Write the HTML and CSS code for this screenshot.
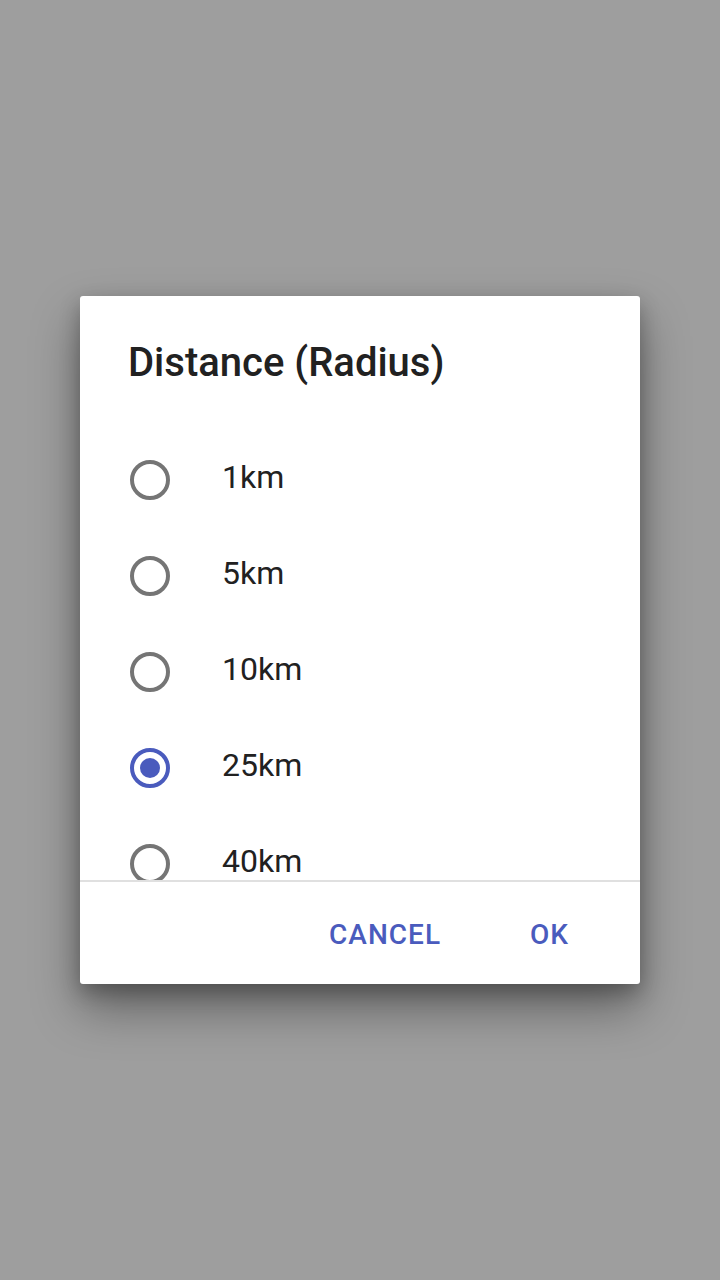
FILE: index.html
```html
<!DOCTYPE html>
<html>
<head>
<meta charset="utf-8">
<link rel="stylesheet" href="styles.css">
</head>
<body>
<div class="screen">
  <div class="dialog">
    <div class="title">Distance (Radius)</div>
    <div class="list">
      <div class="row"><span class="radio"></span><span class="label">1km</span></div>
      <div class="row"><span class="radio"></span><span class="label">5km</span></div>
      <div class="row"><span class="radio"></span><span class="label">10km</span></div>
      <div class="row"><span class="radio checked"></span><span class="label">25km</span></div>
      <div class="row"><span class="radio"></span><span class="label">40km</span></div>
    </div>
    <div class="divider"></div>
    <div class="actions">
      <span class="btn">CANCEL</span>
      <span class="btn">OK</span>
    </div>
  </div>
</div>
</body>
</html>
```
FILE: styles.css
```css
html, body {
  margin: 0;
  padding: 0;
}
body {
  background: #9e9e9e;
  font-family: Roboto, "Noto Sans", sans-serif;
}
.screen {
  width: 720px;
  height: 1280px;
  padding-top: 296px;
  box-sizing: border-box;
}
.dialog {
  margin-left: 80px;
  width: 560px;
  height: 688px;
  background: #ffffff;
  border-radius: 3px;
  box-shadow: 0 24px 48px rgba(0,0,0,0.38), 0 8px 20px rgba(0,0,0,0.25);
  display: flex;
  flex-direction: column;
  overflow: hidden;
}
.title {
  padding: 41px 48px 0 48px;
  height: 79px;
  font-size: 40px;
  font-weight: 500;
  color: #212121;
  line-height: 52px;
}
.list {
  height: 464px;
  overflow: hidden;
  padding-top: 16px;
  box-sizing: border-box;
}
.row {
  height: 96px;
  display: flex;
  align-items: center;
  padding-left: 50px;
}
.radio {
  width: 40px;
  height: 40px;
  box-sizing: border-box;
  border: 4px solid #757575;
  border-radius: 50%;
  display: flex;
  align-items: center;
  justify-content: center;
  flex: none;
}
.radio.checked {
  border-color: #4a5bbd;
}
.radio.checked::after {
  content: "";
  width: 20px;
  height: 20px;
  border-radius: 50%;
  background: #4a5bbd;
}
.label {
  margin-left: 52px;
  font-size: 32px;
  color: #212121;
  line-height: 40px;
  margin-top: -6px;
}
.divider {
  height: 2px;
  background: #e0e0e0;
  flex: none;
}
.actions {
  flex: 1;
  display: flex;
  justify-content: flex-end;
  align-items: center;
  padding-right: 71px;
  padding-top: 4px;
  gap: 89px;
}
.btn {
  font-size: 28px;
  font-weight: 500;
  color: #4a5bbd;
  letter-spacing: 1px;
  line-height: 36px;
}
```
